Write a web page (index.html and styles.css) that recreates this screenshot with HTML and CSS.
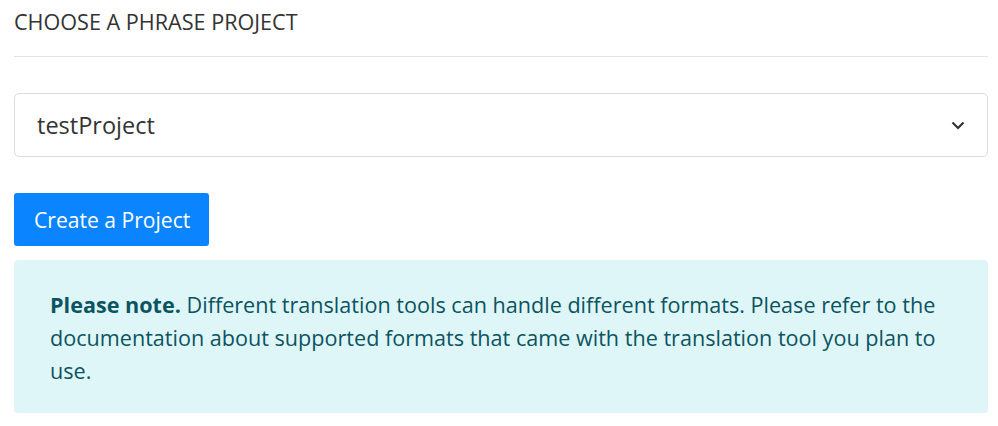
FILE: index.html
```html
<!DOCTYPE html>
<html>
<head>
<meta charset="utf-8">
<link rel="stylesheet" href="styles.css">
</head>
<body>
<div class="panel">
  <h2 class="title">CHOOSE A PHRASE PROJECT</h2>
  <div class="select">
    <span class="select-value">testProject</span>
    <svg class="chevron" width="14" height="9" viewBox="0 0 14 9"><path d="M1.5 1.5 L7 7 L12.5 1.5" fill="none" stroke="#333" stroke-width="2.2"/></svg>
  </div>
  <button class="btn">Create a Project</button>
  <div class="alert"><strong>Please note.</strong> Different translation tools can handle different formats. Please refer to the documentation about supported formats that came with the translation tool you plan to use.</div>
</div>
</body>
</html>
```
FILE: styles.css
```css
html, body { margin: 0; padding: 0; background: #fff; }
body { font-family: "Open Sans", sans-serif; color: #333; }
.panel { padding: 0 10px 0 14px; display: flex; flex-direction: column; }
.title { margin: 0; font-size: 21.6px; font-weight: 400; line-height: 28px; padding: 8px 0 20px; border-bottom: 1px solid #e3e3e3; color: #333; }
.select { margin-top: 36px; height: 62px; border: 1px solid #dcdcdc; border-radius: 5px; display: flex; align-items: center; justify-content: space-between; padding: 0 22px 0 22px; }
.select-value { font-size: 23.5px; color: #333; }
.chevron { display: block; }
.btn { align-self: flex-start; margin-top: 36px; height: 53px; padding: 0 19px 0 20px; background: #0a84ff; color: #fff; border: 0; border-radius: 3px; font-family: "Open Sans", sans-serif; font-size: 21.1px; }
.alert { margin-top: 14px; background: #dff6f9; color: #0b5460; border-radius: 4px; padding: 28px 36px 26px; font-size: 21.6px; line-height: 33px; }
.alert strong { font-weight: 700; }
```
